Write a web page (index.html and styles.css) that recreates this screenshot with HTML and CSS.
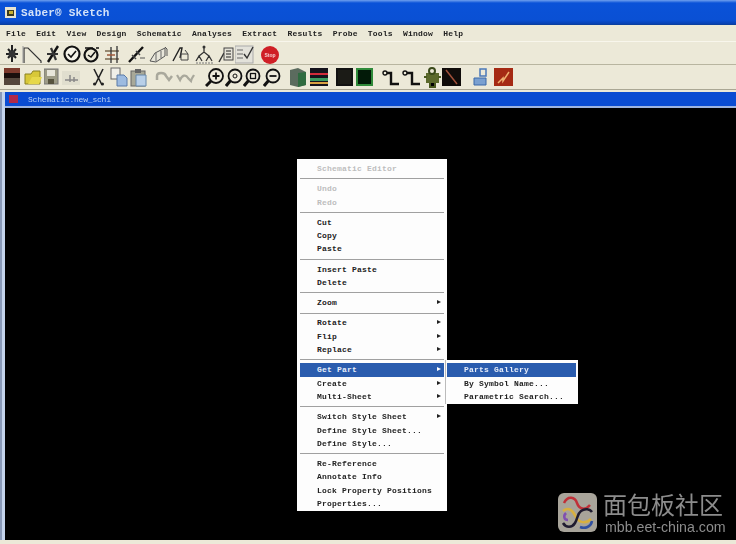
FILE: index.html
```html
<!DOCTYPE html>
<html lang="en">
<head>
<meta charset="utf-8">
<title>Saber Sketch</title>
<link rel="stylesheet" href="styles.css">
</head>
<body>
<div class="app">
  <header class="titlebar">
    <svg class="appicon" width="11" height="11"><rect width="11" height="11" fill="#e8e4d0"/><rect x="2" y="3" width="7" height="6" fill="#3a3a20"/><rect x="4" y="4" width="4" height="3" fill="#c8b030"/></svg>
    <span class="apptitle">Saber® Sketch</span>
  </header>
  <nav class="menubar">
    <span>File</span><span>Edit</span><span>View</span><span>Design</span><span>Schematic</span><span>Analyses</span><span>Extract</span><span>Results</span><span>Probe</span><span>Tools</span><span>Window</span><span>Help</span>
  </nav>
  <div class="toolbar first">
    <svg width="18" height="23"><path d="M8 3v17M2 12h12M4 7l8 9M12 7l-8 9" stroke="#222" stroke-width="2"/><circle cx="8" cy="12" r="3.500" fill="#333"/></svg>
    <svg width="23" height="23"><path d="M2 21V6h4l13 13v2" fill="none" stroke="#333" stroke-width="1.2"/><path d="M1 4v17" stroke="#999"/></svg>
    <svg width="18" height="23"><path d="M3 20L13 4" stroke="#111" stroke-width="2.400"/><path d="M6 6l5 12M2 12h11" stroke="#333" stroke-width="2.200"/></svg>
    <svg width="20" height="23"><circle cx="9" cy="12" r="7.500" fill="#f4f2e8" stroke="#111" stroke-width="2.200"/><path d="M5 12l3 3 5-6" fill="none" stroke="#111" stroke-width="1.600"/></svg>
    <svg width="20" height="23"><circle cx="8" cy="13" r="6.500" fill="none" stroke="#111" stroke-width="2.200"/><path d="M5 13l3 2 4-5" fill="none" stroke="#111" stroke-width="1.500"/><path d="M2 6h8M13 6h3" stroke="#111" stroke-width="1.500"/></svg>
    <svg width="25" height="23"><path d="M2 9h14M2 17h14" stroke="#7a6a50" stroke-width="1.500"/><path d="M8 5v16M14 4v17" stroke="#333" stroke-width="1.300"/><path d="M4 13h8" stroke="#a0593a" stroke-width="1.500"/></svg>
    <svg width="21" height="23"><path d="M1 20L15 5" stroke="#111" stroke-width="2.400"/><path d="M4 13l4 4M8 9l4 4" stroke="#444" stroke-width="1.500"/><path d="M12 16h5" stroke="#555"/></svg>
    <svg width="22" height="23"><path d="M1 19l5-8 10-5v8l-9 6z" fill="#e8e6da" stroke="#555"/><path d="M7 11v8M12 9v7" stroke="#666"/><path d="M16 5l2 2v7" fill="none" stroke="#555"/></svg>
    <svg width="24" height="23"><path d="M2 19L9 6h2l-2 10" fill="none" stroke="#222" stroke-width="1.400"/><path d="M10 12h7v6h-7zM14 8l3 4" fill="none" stroke="#444"/></svg>
    <svg width="22" height="23"><circle cx="9" cy="5" r="1.500" fill="#333"/><path d="M9 6v4M4 14l5-4 5 4M1 19l3-5 3 5M11 19l3-5 3 5" fill="none" stroke="#333" stroke-width="1.300"/><path d="M1 21h18" stroke="#777" stroke-dasharray="2 1"/></svg>
    <svg width="18" height="23"><path d="M2 20l5-9" stroke="#333" stroke-width="1.500"/><rect x="7" y="6" width="9" height="12" fill="#e4e2d8" stroke="#444"/><path d="M9 9h5M9 12h5M9 15h5" stroke="#222"/></svg>
    <svg width="26" height="23"><rect y="4" width="18" height="17" fill="#e3e2da" stroke="#aaa"/><path d="M2 8h6M2 12h6M2 16h6" stroke="#666"/><path d="M9 12l3 4 6-11" fill="none" stroke="#333" stroke-width="1.400"/></svg>
    <svg width="20" height="23"><circle cx="9" cy="13" r="9" fill="#cf1f26"/><text class="stop" x="9" y="15" text-anchor="middle">Stop</text></svg>
  </div>
  <div class="toolbar second">
    <svg width="20" height="23"><rect y="3" width="16" height="17" fill="#1a0f0c"/><rect y="3" width="16" height="5" fill="#7c3a2c"/><rect y="13" width="16" height="7" fill="#55473c"/></svg>
    <svg width="20" height="23"><path d="M1 9h6l2-3h7v13H1z" fill="#d8c838" stroke="#8a8020"/><path d="M4 19l4-7h10l-3 7z" fill="#e6d84a"/></svg>
    <svg width="18" height="23"><rect y="4" width="14" height="15" fill="#9d9b86" stroke="#777"/><rect x="3" y="5" width="8" height="6" fill="#e8e6da"/><rect x="4" y="14" width="6" height="5" fill="#57533e"/></svg>
    <svg width="30" height="23"><rect y="6" width="18" height="14" fill="#e0dece"/><path d="M3 15h13M8 10v7M12 12v5" stroke="#888" stroke-width="1.500"/></svg>
    <svg width="18" height="23"><path d="M2 4l8 16M11 4L3 20" stroke="#222" stroke-width="1.600"/><circle cx="2.500" cy="19" r="1.500" fill="#222"/><circle cx="10.500" cy="19" r="1.500" fill="#222"/></svg>
    <svg width="20" height="23"><rect x="1" y="3" width="9" height="11" fill="#f0efe8" stroke="#666"/><path d="M7 10h7l3 3v8H7z" fill="#9dbbe0" stroke="#5a7aa8"/></svg>
    <svg width="25" height="23"><rect x="1" y="6" width="14" height="15" fill="#a8a898" stroke="#666"/><rect x="5" y="4" width="6" height="4" fill="#666"/><path d="M6 10h10v11H6z" fill="#b8cfe8" stroke="#6688aa"/></svg>
    <svg width="20" height="23"><path d="M2 15V11c0-4 8-4 9 0l3 4 3-4" fill="none" stroke="#a9a89c" stroke-width="2.500"/></svg>
    <svg width="30" height="23"><path d="M2 10l3 5c2-5 6-6 8-2l3 3c1-4 2-4 3-6" fill="none" stroke="#a9a89c" stroke-width="2.200"/></svg>
    <svg width="20" height="23"><path d="M1 21l6-6" stroke="#111" stroke-width="3"/><circle cx="11" cy="11" r="7" fill="#eeeadc" stroke="#111" stroke-width="1.800"/><path d="M7.500 11h7M11 7.500v7" stroke="#111" stroke-width="1.800"/></svg>
    <svg width="18" height="23"><path d="M1 21l5-6" stroke="#111" stroke-width="3"/><circle cx="10" cy="11" r="6.500" fill="#eeeadc" stroke="#111" stroke-width="1.800"/><circle cx="10" cy="11" r="2" fill="none" stroke="#111"/></svg>
    <svg width="20" height="23"><path d="M1 21l5-6" stroke="#111" stroke-width="3"/><circle cx="10" cy="11" r="6.500" fill="#eeeadc" stroke="#111" stroke-width="1.800"/><rect x="7.500" y="8.500" width="5" height="5" fill="none" stroke="#111" stroke-width="1.300"/></svg>
    <svg width="27" height="23"><path d="M1 21l5-6" stroke="#111" stroke-width="3"/><circle cx="10" cy="11" r="6.500" fill="#eeeadc" stroke="#111" stroke-width="1.800"/><path d="M6.500 11h7" stroke="#111" stroke-width="1.800"/></svg>
    <svg width="20" height="23"><path d="M0 5l8-2 8 4v13l-8 2-8-2z" fill="#5b6b5e"/><path d="M8 8l8-1v13l-8 2z" fill="#2f6b40"/></svg>
    <svg width="26" height="23"><rect y="3" width="18" height="18" fill="#15131c"/><rect y="8" width="18" height="2" fill="#d22a3a"/><rect y="13" width="18" height="3" fill="#3a9a60"/><rect y="17" width="18" height="2" fill="#d8a040"/></svg>
    <svg width="20" height="23"><rect y="3" width="17" height="18" fill="#111"/><rect x="2" y="5" width="13" height="14" fill="#1b1b16"/></svg>
    <svg width="26" height="23"><rect y="3" width="17" height="18" fill="#2f8a3a"/><rect x="2" y="5" width="13" height="14" fill="#021a08"/></svg>
    <svg width="20" height="23"><circle cx="3" cy="8" r="2" fill="none" stroke="#111" stroke-width="1.400"/><path d="M5 8h4v11h8" fill="none" stroke="#111" stroke-width="2.400"/></svg>
    <svg width="22" height="23"><circle cx="3" cy="8" r="2" fill="none" stroke="#111" stroke-width="1.400"/><path d="M5 8h5v11h8" fill="none" stroke="#111" stroke-width="2.400"/></svg>
    <svg width="18" height="23"><rect x="2" y="8" width="13" height="10" fill="#5c6a2c"/><circle cx="8" cy="6" r="3" fill="none" stroke="#3a4a1a" stroke-width="2"/><path d="M6 18v4h5v-4M0 12h3M14 12h3" stroke="#4a5a20" stroke-width="2"/></svg>
    <svg width="30" height="23"><rect y="3" width="19" height="18" fill="#100c0a"/><path d="M4 5l11 14" stroke="#a0503a" stroke-width="1.500"/></svg>
    <svg width="22" height="23"><path d="M8 4h6v7H8z" fill="none" stroke="#4a78b8" stroke-width="1.500"/><path d="M2 13h12v7H2z" fill="#7aa0d0" stroke="#3a68a8"/></svg>
    <svg width="20" height="23"><rect y="3" width="19" height="18" fill="#a52a14"/><path d="M4 18l5-5v3l6-9" fill="none" stroke="#f0b070" stroke-width="1.500"/></svg>
  </div>
  <main class="child">
    <div class="childbar">
      <svg width="9" height="8"><rect width="9" height="8" fill="#b02a4a"/></svg>
      <span class="childtitle">Schematic:new_sch1</span>
    </div>
    <div class="canvas">
      <div class="menu">
        <div class="item off">Schematic Editor</div>
        <hr>
        <div class="item off">Undo</div>
        <div class="item off">Redo</div>
        <hr>
        <div class="item">Cut</div>
        <div class="item">Copy</div>
        <div class="item">Paste</div>
        <hr>
        <div class="item">Insert Paste</div>
        <div class="item">Delete</div>
        <hr>
        <div class="item more">Zoom</div>
        <hr>
        <div class="item more">Rotate</div>
        <div class="item more">Flip</div>
        <div class="item more">Replace</div>
        <hr>
        <div class="item more active">Get Part
          <div class="submenu">
            <div class="item active">Parts Gallery</div>
            <div class="item">By Symbol Name...</div>
            <div class="item">Parametric Search...</div>
          </div>
        </div>
        <div class="item more">Create</div>
        <div class="item more">Multi-Sheet</div>
        <hr>
        <div class="item more">Switch Style Sheet</div>
        <div class="item">Define Style Sheet...</div>
        <div class="item">Define Style...</div>
        <hr>
        <div class="item">Re-Reference</div>
        <div class="item">Annotate Info</div>
        <div class="item">Lock Property Positions</div>
        <div class="item">Properties...</div>
      </div>
      <div class="watermark">
        <svg class="wmlogo" width="39" height="39" viewBox="0 0 39 39"><rect width="39" height="39" rx="6" fill="#a8a49a"/><path d="M6 10c4-8 11-6 13 0s8 8 13 2" fill="none" stroke="#c03038" stroke-width="2.500"/><path d="M5 18c6-5 10 0 13 6s10 7 15 2" fill="none" stroke="#d8b040" stroke-width="2.500"/><path d="M5 30c3 5 9 5 12 0s2-9 6-12 9-2 11 1" fill="none" stroke="#201c30" stroke-width="2.500"/><path d="M22 34c5 2 11 0 12-6" fill="none" stroke="#3050a0" stroke-width="2.500"/><path d="M8 20c-3 3-2 7 2 7" fill="none" stroke="#8050b0" stroke-width="2.500"/></svg>
        <div class="wmtext">
          <div class="wmcn">面包板社区</div>
          <div class="wmurl">mbb.eet-china.com</div>
        </div>
      </div>
    </div>
  </main>
  <footer class="statusbar"></footer>
</div>
</body>
</html>
```
FILE: styles.css
```css
* { box-sizing: border-box; }
html, body { margin: 0; padding: 0; background: #000; }
.app {
  width: 736px; height: 544px; overflow: hidden;
  display: flex; flex-direction: column;
  background: #ece9d8;
  font-family: "Liberation Mono", monospace;
  font-weight: 700;
}
.titlebar {
  height: 25px; flex: none;
  display: flex; align-items: center; gap: 5px; padding: 1px 0 0 5px;
  background: linear-gradient(#6fa0ee 0, #0a52d8 3px, #0a50d4 20px, #0840b0 24px);
  border-bottom: 1px solid #0a3fa0;
}
.appicon { filter: blur(.4px); }
.apptitle {
  font-size: 11px; letter-spacing: .02em; color: #d4e2f8;
  filter: blur(.5px);
}
.menubar {
  height: 16px; flex: none;
  display: flex; align-items: center; gap: 10.2px; padding-left: 6px;
  font-size: 8px; letter-spacing: .2px; color: #222;
  filter: blur(.45px);
}
.toolbar {
  height: 24px; flex: none;
  display: flex; align-items: flex-start; padding-left: 4px;
  border-bottom: 1px solid #b8b5a0;
}
.toolbar svg { display: block; flex: none; filter: blur(.45px); }
.toolbar.first { border-top: 1px solid #f8f6ec; }
.toolbar.second { height: 25px; border-bottom: 1px solid #aaa794; }
.stop { font: 700 5px "Liberation Sans", sans-serif; fill: #f5d0d0; }
.child {
  flex: 1; min-height: 0;
  display: flex; flex-direction: column;
  margin-top: 2px; padding-left: 5px;
  background: linear-gradient(90deg, #8a9ab8 0, #8a9ab8 2px, #c4d4ec 2px, #c4d4ec 5px);
}
.childbar {
  height: 16px; flex: none;
  display: flex; align-items: center; gap: 10px; padding-left: 4px;
  background: #0a4cd2;
  border-bottom: 2px solid #9db4e0;
}
.childtitle { font-size: 8px; font-weight: 400; letter-spacing: -.2px; color: #bcd2f4; filter: blur(.35px); }
.canvas { flex: 1; position: relative; background: #000; }
.menu {
  position: absolute; left: 292px; top: 51px;
  width: 150px; height: 352px;
  padding: 3px 3px 1px;
  background: #fdfdfd;
  font-size: 8px; letter-spacing: .2px; color: #222;
  filter: blur(.4px);
}
.menu hr {
  height: 1px; margin: 3px 0 2.750px; border: 0;
  background: #a0a0a0;
}
.item {
  height: 13.4px; line-height: 13.4px; padding-left: 17px;
  position: relative; white-space: nowrap;
}
.item.off { color: #bdbdbd; }
.item.more::after {
  content: ""; position: absolute; right: 3px; top: 4px;
  border-left: 4px solid #222; border-top: 2.500px solid transparent; border-bottom: 2.500px solid transparent;
}
.item.active { background: #2a5cae; color: #e8eefa; }
.item.active.more::after { border-left-color: #fff; }
.submenu {
  position: absolute; left: 145px; top: -3px;
  width: 133px; height: 44px;
  padding: 3px 2px 0 1px;
  background: #fdfdfd; color: #222;
  border-left: 1px solid #bbb;
}
.watermark {
  position: absolute; left: 553px; top: 385px;
  display: flex; gap: 6px; align-items: flex-start;
  font-weight: 400;
}
.wmlogo { display: block; filter: blur(.4px); }
.wmcn {
  font: 400 24px/26px "Noto Sans CJK SC", sans-serif;
  margin-top: -2px; color: #8c8c8c; white-space: nowrap;
}
.wmurl {
  font: 400 14.200px/14px "Liberation Sans", sans-serif;
  margin: 3px 0 0 2px; color: #8c8c8c; white-space: nowrap;
}
.statusbar { height: 4px; flex: none; margin-left: -5px; background: #ece9d8; }
```
